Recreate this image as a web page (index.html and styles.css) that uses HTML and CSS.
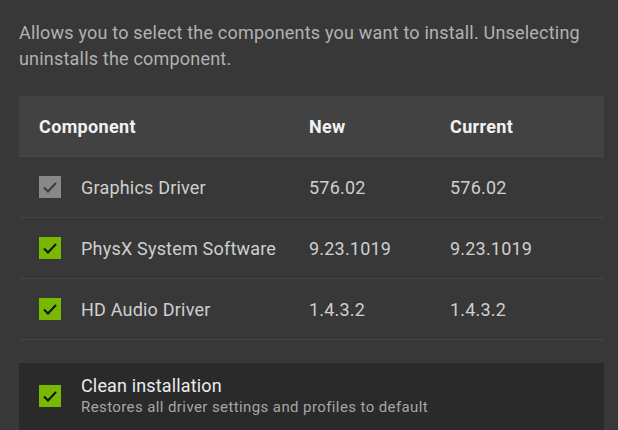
FILE: index.html
```html
<!DOCTYPE html>
<html lang="en">
<head>
  <meta charset="UTF-8">
  <title>Driver Components</title>
  <link rel="stylesheet" href="styles.css">
</head>
<body>

<div class="panel">
  <p class="intro">Allows you to select the components you want to install. Unselecting uninstalls the component.</p>

  <div class="table">
    <div class="row head">
      <div>Component</div>
      <div>New</div>
      <div>Current</div>
    </div>
    <div class="row">
      <div class="name"><span class="check disabled"><svg viewBox="0 0 22 22"><path d="M5 11.5l4 4 8-8.5"/></svg></span>Graphics Driver</div>
      <div>576.02</div>
      <div>576.02</div>
    </div>
    <div class="row">
      <div class="name"><span class="check"><svg viewBox="0 0 22 22"><path d="M5 11.5l4 4 8-8.5"/></svg></span>PhysX System Software</div>
      <div>9.23.1019</div>
      <div>9.23.1019</div>
    </div>
    <div class="row">
      <div class="name"><span class="check"><svg viewBox="0 0 22 22"><path d="M5 11.5l4 4 8-8.5"/></svg></span>HD Audio Driver</div>
      <div>1.4.3.2</div>
      <div>1.4.3.2</div>
    </div>
  </div>

  <div class="clean">
    <span class="check"><svg viewBox="0 0 22 22"><path d="M5 11.5l4 4 8-8.5"/></svg></span>
    <div>
      <div class="clean-title">Clean installation</div>
      <div class="clean-sub">Restores all driver settings and profiles to default</div>
    </div>
  </div>
</div>

</body>
</html>
```

FILE: styles.css
```css
body {
  margin: 0;
  background-color: #383838;
  font-family: Roboto, "Liberation Sans", sans-serif;
  overflow: hidden;
}
.panel {
  padding: 20px 14px 0 19px;
}
.intro {
  margin: 0 0 24px;
  font-size: 18px;
  letter-spacing: 0.2px;
  line-height: 26px;
  color: #b2b2b2;
}
.row {
  display: grid;
  grid-template-columns: 270px 141px 1fr;
  align-items: center;
  padding: 0 20px;
  height: 60px;
  border-bottom: 1px solid #444444;
  font-size: 18px;
  letter-spacing: 0.2px;
  color: #cfcfcf;
}
.row.head {
  background-color: #424242;
  border-bottom: 1px solid #484848;
  color: #f2f2f2;
  font-weight: bold;
  letter-spacing: 0.35px;
}
.name {
  display: flex;
  align-items: center;
  gap: 20px;
}
.check {
  display: inline-flex;
  width: 22px;
  height: 22px;
  background-color: #76b900;
  flex-shrink: 0;
}
.check svg {
  width: 22px;
  height: 22px;
  fill: none;
  stroke: #111;
  stroke-width: 2;
}
.check.disabled {
  background-color: #888888;
}
.check.disabled svg {
  stroke: #3c3c3c;
}
.clean {
  display: flex;
  align-items: center;
  gap: 20px;
  margin-top: 23px;
  padding: 11px 20px 14px;
  background-color: #2a2a2a;
}
.clean-title {
  font-size: 18px;
  letter-spacing: 0.15px;
  color: #ececec;
  line-height: 23px;
}
.clean-sub {
  font-size: 15px;
  letter-spacing: 0.4px;
  color: #a6a6a6;
  line-height: 21px;
}
```
